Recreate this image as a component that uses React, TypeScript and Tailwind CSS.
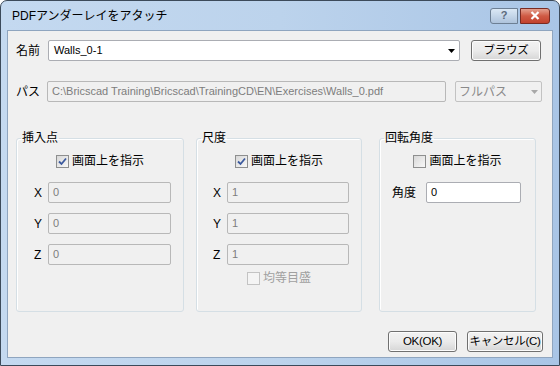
import React from "react";

const ui = { fontFamily: '"Liberation Sans", "Noto Sans CJK JP", sans-serif' };

function Check({ checked, disabled }: { checked?: boolean; disabled?: boolean }) {
  return (
    <span
      className={`flex h-[13px] w-[13px] items-center justify-center border ${
        disabled ? "border-[#c3c3c3] bg-[#f4f4f4]" : "border-[#8e8f8f] bg-linear-to-br from-[#d8d8d8] to-[#f8f8f8]"
      }`}
    >
      {checked && (
        <svg width="9" height="9" viewBox="0 0 9 9">
          <path d="M1 4.5 L3.5 7 L8 1.5" fill="none" stroke="#3c5a9e" strokeWidth="1.8" />
        </svg>
      )}
    </span>
  );
}

function CheckRow({ label, checked, disabled }: { label: string; checked?: boolean; disabled?: boolean }) {
  return (
    <div className="flex items-center justify-center gap-[3px]">
      <Check checked={checked} disabled={disabled} />
      <span className={`text-[12px] leading-[14px] ${disabled ? "text-[#a0a0a0]" : "text-black"}`}>{label}</span>
    </div>
  );
}

function Field({ value, enabled, w }: { value: string; enabled?: boolean; w: string }) {
  return (
    <div
      className={`flex h-[21px] items-center whitespace-nowrap rounded-[2px] border px-[4px] text-[11px] ${w} ${
        enabled ? "border-[#abadb3] bg-white text-black" : "border-[#b8b8b8] bg-[#f0f0f0] text-[#7d7d7d]"
      }`}
    >
      {value}
    </div>
  );
}

function Btn({ label, w }: { label: string; w: string }) {
  return (
    <div
      className={`flex h-[21px] items-center justify-center whitespace-nowrap rounded-[3px] border border-[#707070] bg-linear-to-b from-[#f2f2f2] via-[#ebebeb] to-[#d6d6d6] text-[11.5px] tracking-[-0.3px] text-black shadow-[inset_0_0_0_1px_#fcfcfc] ${w}`}
    >
      {label}
    </div>
  );
}

function XYZ({ v, w, labelW }: { v: string; w: string; labelW: string }) {
  return (
    <div className="flex flex-col gap-[10px]">
      {["X", "Y", "Z"].map((a) => (
        <div key={a} className="flex items-center">
          <span className={`text-[12px] text-black ${labelW}`}>{a}</span>
          <Field value={v} w={w} />
        </div>
      ))}
    </div>
  );
}

function Group({ title, w, children }: { title: string; w: string; children: React.ReactNode }) {
  return (
    <fieldset className={`h-[181px] rounded-[3px] border border-[#d5dfe5] shadow-[inset_1px_1px_0_#fff] ${w}`}>
      <legend className="ml-[4px] px-[1px] text-[12px] leading-[14px] text-black">{title}</legend>
      {children}
    </fieldset>
  );
}

export default function App() {
  return (
    <div className="h-[366px] w-[560px] bg-white" style={ui}>
      <div className="flex h-[366px] w-[560px] flex-col rounded-t-[7px] border border-[#3c4a5a] bg-linear-to-r from-[#c4d9f0] via-[#bcd3ec] to-[#a9c5e6]">
        {/* title bar */}
        <div className="flex h-[29px] items-center pl-[11px] pr-[9px]">
          <span className="flex-1 text-[12px] text-black">PDFアンダーレイをアタッチ</span>
          <div className="flex gap-[2px]">
            <div className="flex h-[16px] w-[28px] items-center justify-center rounded-l-[3px] border border-[#6d7f94] bg-linear-to-b from-[#dbe8f5] to-[#aec3dc] text-[11px] font-bold leading-none text-[#5b6a7c]">
              ?
            </div>
            <div className="flex h-[16px] w-[30px] items-center justify-center rounded-r-[3px] border border-[#7a2b22] bg-linear-to-b from-[#e3a08f] via-[#cf5a44] to-[#c2412e]">
              <svg width="10" height="9" viewBox="0 0 10 9">
                <path d="M1.5 1 L8.5 8 M8.5 1 L1.5 8" stroke="#fff" strokeWidth="2.2" />
              </svg>
            </div>
          </div>
        </div>
        {/* client area */}
        <div className="mx-[6px] flex h-[328px] flex-col border border-[#8fa5bf] bg-[#f0f0f0] px-[8px] pt-[9px]">
          <div className="flex items-center">
            <span className="w-[32px] text-[12px] text-black">名前</span>
            <div className="flex h-[21px] w-[412px] items-center justify-between rounded-[2px] border border-[#abadb3] bg-white pl-[5px] pr-[4px] text-[11px] text-black">
              <span>Walls_0-1</span>
              <svg width="7" height="4" viewBox="0 0 7 4">
                <path d="M0 0 H7 L3.5 4 Z" fill="#000" />
              </svg>
            </div>
            <div className="ml-[11px]">
              <Btn label="ブラウズ" w="w-[70px]" />
            </div>
          </div>
          <div className="mt-[20px] flex items-center">
            <span className="w-[31px] text-[12px] text-black">パス</span>
            <Field value="C:\Bricscad Training\Bricscad\TrainingCD\EN\Exercises\Walls_0.pdf" w="w-[399px]" />
            <div className="ml-[9px] flex h-[21px] w-[87px] items-center justify-between rounded-[2px] border border-[#c2c2c2] bg-[#f0f0f0] px-[3px] text-[12px] text-[#8a8a8a]">
              <span>フルパス</span>
              <svg width="7" height="4" viewBox="0 0 7 4">
                <path d="M0 0 H7 L3.5 4 Z" fill="#a8a8a8" />
              </svg>
            </div>
          </div>
          <div className="mt-[29px] flex">
            <Group title="挿入点" w="w-[168px]">
              <div className="mt-[9px]">
                <CheckRow label="画面上を指示" checked />
              </div>
              <div className="mt-[14px] pl-[17px]">
                <XYZ v="0" w="w-[123px]" labelW="w-[14px]" />
              </div>
            </Group>
            <div className="ml-[12px]">
              <Group title="尺度" w="w-[166px]">
                <div className="mt-[9px]">
                  <CheckRow label="画面上を指示" checked />
                </div>
                <div className="mt-[14px] pl-[16px]">
                  <XYZ v="1" w="w-[122px]" labelW="w-[14px]" />
                </div>
                <div className="mt-[6px]">
                  <CheckRow label="均等目盛" disabled />
                </div>
              </Group>
            </div>
            <div className="ml-[17px]">
              <Group title="回転角度" w="w-[157px]">
                <div className="mt-[9px]">
                  <CheckRow label="画面上を指示" />
                </div>
                <div className="mt-[14px] flex items-center pl-[12px]">
                  <span className="w-[34px] text-[12px] text-black">角度</span>
                  <Field value="0" enabled w="w-[95px]" />
                </div>
              </Group>
            </div>
          </div>
          <div className="mt-[19px] flex justify-end gap-[10px] pr-[1px]">
            <Btn label="OK(OK)" w="w-[69px]" />
            <Btn label="キャンセル(C)" w="w-[76px]" />
          </div>
        </div>
      </div>
    </div>
  );
}
